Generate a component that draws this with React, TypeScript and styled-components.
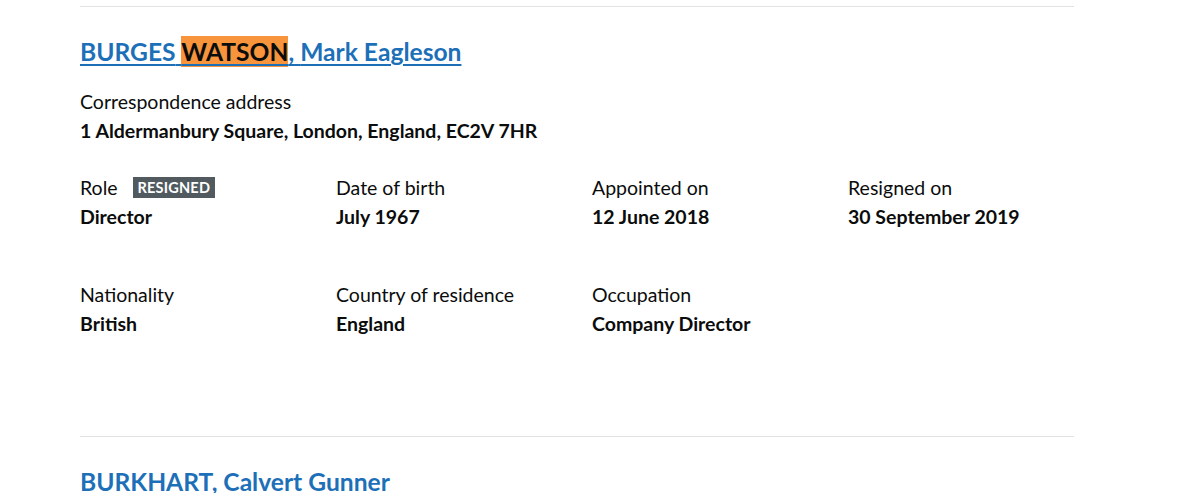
import styled, { createGlobalStyle } from "styled-components";

const GlobalStyle = createGlobalStyle`
  body {
    margin: 0;
    background: #ffffff;
    color: #0b0c0c;
    font-family: Lato, "Liberation Sans", Arial, sans-serif;
  }
`;

type Field = {
  label: string;
  value: string;
  tag?: string;
};

type Officer = {
  surname: string[];
  highlight?: string;
  forename: string;
  address: string;
  rows: Field[][];
};

const officers: Officer[] = [
  {
    surname: ["BURGES", "WATSON"],
    highlight: "WATSON",
    forename: "Mark Eagleson",
    address: "1 Aldermanbury Square, London, England, EC2V 7HR",
    rows: [
      [
        { label: "Role", value: "Director", tag: "Resigned" },
        { label: "Date of birth", value: "July 1967" },
        { label: "Appointed on", value: "12 June 2018" },
        { label: "Resigned on", value: "30 September 2019" },
      ],
      [
        { label: "Nationality", value: "British" },
        { label: "Country of residence", value: "England" },
        { label: "Occupation", value: "Company Director" },
      ],
    ],
  },
  {
    surname: ["BURKHART"],
    forename: "Calvert Gunner",
    address: "",
    rows: [],
  },
];

const App = () => {
  return (
    <Page>
      <GlobalStyle />
      {officers.map((o) => (
        <Appointment key={o.forename}>
          <Heading>
            <NameLink href="#">
              {o.surname.map((part, i) => (
                <span key={part}>
                  {i > 0 ? " " : ""}
                  {part === o.highlight ? <Mark>{part}</Mark> : part}
                </span>
              ))}
              , {o.forename}
            </NameLink>
          </Heading>
          {o.address !== "" && (
            <Address>
              <Label>Correspondence address</Label>
              <Value>{o.address}</Value>
            </Address>
          )}
          {o.rows.map((row, r) => (
            <Row key={r}>
              {row.map((f) => (
                <Item key={f.label}>
                  <Label>
                    {f.label}
                    {f.tag ? <Tag>{f.tag}</Tag> : undefined}
                  </Label>
                  <Value>{f.value}</Value>
                </Item>
              ))}
            </Row>
          ))}
        </Appointment>
      ))}
    </Page>
  );
};

const Page = styled.div`
  width: 994px;
  padding-left: 80px;
  padding-top: 6px;
`;

const Appointment = styled.div`
  border-top: 1px solid #e2e2e2;
  padding-top: 30px;
  padding-bottom: 47px;
`;

const Heading = styled.h2`
  margin: 0 0 22px;
  font-size: 24.6px;
  line-height: 30px;
  font-weight: 700;
`;

const NameLink = styled.a`
  color: #1d70b8;
  text-decoration: underline;
  text-decoration-thickness: 2px;
  text-underline-offset: 3px;
`;

const Mark = styled.mark`
  background: #f7943c;
  color: #0b0c0c;
  padding: 1px 0;
`;

const Address = styled.dl`
  margin: 0 0 32px;
`;

const Row = styled.dl`
  margin: 0 0 53px;
  display: grid;
  grid-template-columns: repeat(4, 1fr);
  column-gap: 30px;
`;

const Item = styled.div``;

const Label = styled.dt`
  font-size: 19.5px;
  line-height: 25px;
  margin-bottom: 4px;
  display: flex;
  align-items: center;
`;

const Value = styled.dd`
  margin: 0;
  font-size: 19.5px;
  line-height: 25px;
  font-weight: 700;
`;

const Tag = styled.strong`
  margin-left: 15px;
  background: #505a5f;
  color: #ffffff;
  font-size: 14.5px;
  line-height: 21px;
  padding: 0 5px;
  text-transform: uppercase;
  font-weight: 700;
  letter-spacing: 0.2px;
`;

export default App;
